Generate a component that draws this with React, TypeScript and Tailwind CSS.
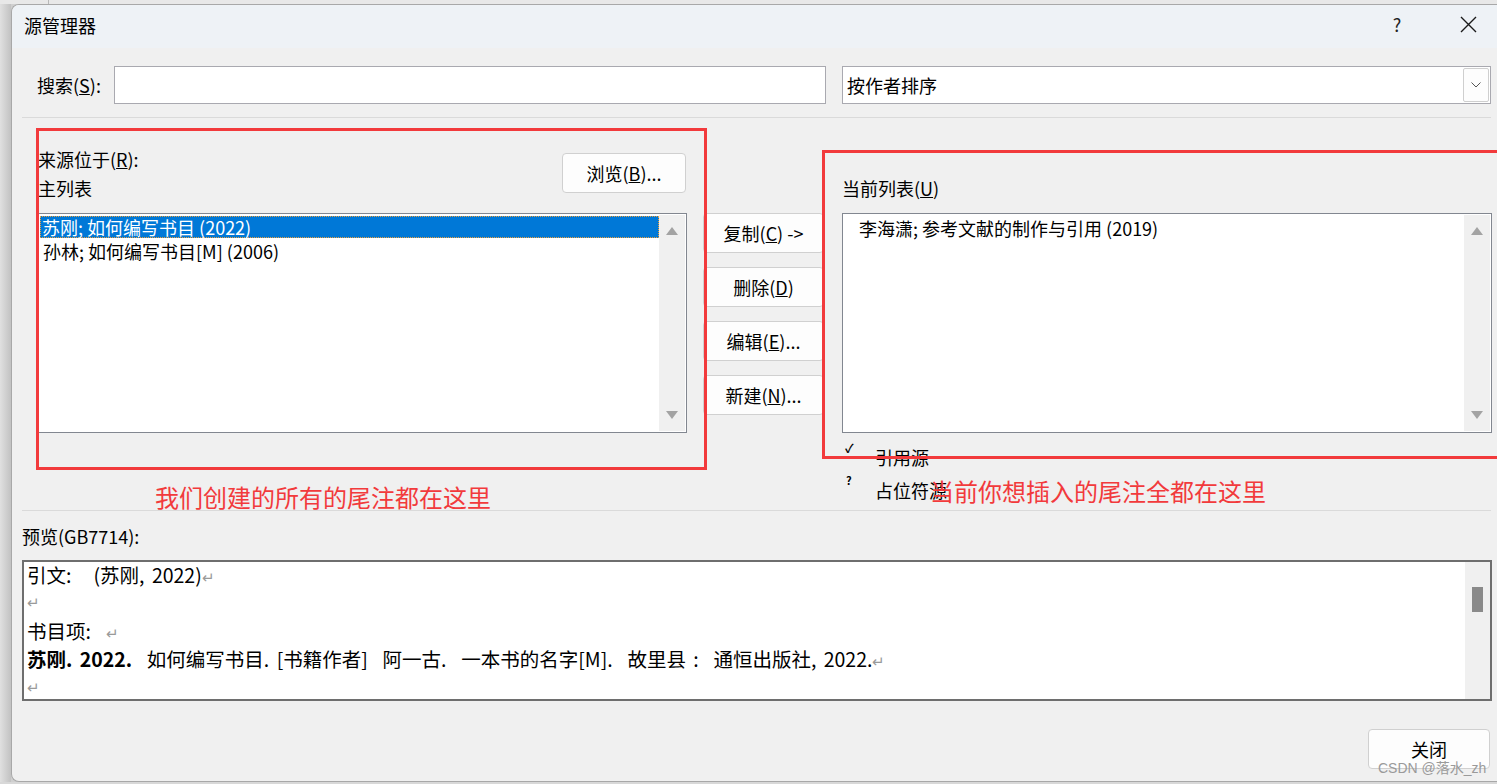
import React from 'react';

const FONT = "font-['Noto_Sans_CJK_SC','Liberation_Sans',sans-serif]";

function ArrowUp() {
  return (
    <svg width="12" height="8" viewBox="0 0 12 8"><path d="M6 0 L12 8 L0 8 Z" fill="#a3a3a3" /></svg>
  );
}

function ArrowDown() {
  return (
    <svg width="12" height="8" viewBox="0 0 12 8"><path d="M0 0 L12 0 L6 8 Z" fill="#a3a3a3" /></svg>
  );
}

function Listbox({ children }: { children: React.ReactNode }) {
  return (
    <div className="h-[220px] border border-[#828790] bg-white flex">
      <div className="flex-1 min-w-0 pt-[2px] pl-[1px]">{children}</div>
      <div className="w-[26px] bg-[#f0f0f0] flex flex-col items-center justify-between py-[12px] my-[1px] mr-[1px]">
        <ArrowUp />
        <ArrowDown />
      </div>
    </div>
  );
}

function Btn({ children, className = '' }: { children: React.ReactNode; className?: string }) {
  return (
    <div className={`h-[40px] bg-[#fdfdfd] border border-[#d0d0d0] rounded-[4px] flex items-center justify-center text-[18px] ${className}`}>
      {children}
    </div>
  );
}

const Ret = () => <span className="text-[#9a9a9a] text-[15px]">↵</span>;

export default function App() {
  return (
    <div className={`relative w-[1497px] h-[784px] overflow-hidden bg-[#cfcfcf] flex flex-col text-black ${FONT}`}>
      {/* backdrop strip */}
      <div className="h-[4px] bg-[#e8e8e8] flex">
        <div className="w-[48px]" />
        <div className="w-px bg-[#b8b8b8]" />
      </div>

      <div className="flex h-[778px]">
        <div className="w-[11px] bg-gradient-to-r from-[#e0e0e0] to-[#c2c2c2]" />

        {/* dialog */}
        <div className="w-[1486px] bg-[#f0f0f0] border-l border-t border-b border-[#a8a8a8] rounded-tl-[8px] rounded-bl-[8px] overflow-hidden flex flex-col">
          {/* title bar */}
          <div className="h-[43px] bg-[#eef2f6] flex items-center pl-[12px] pr-[6px] pb-[4px]">
            <div className="flex-1 text-[18px] leading-none">源管理器</div>
            <div className="w-[46px] text-center text-[18px] text-[#222]">?</div>
            <div className="w-[25px]" />
            <div className="w-[46px] flex items-center justify-center">
              <svg width="17" height="17" viewBox="0 0 17 17"><path d="M1 1 L16 16 M16 1 L1 16" stroke="#1a1a1a" strokeWidth="1.4" /></svg>
            </div>
          </div>

          {/* search row */}
          <div className="mt-[18px] h-[38px] flex items-center pl-[25px]">
            <div className="w-[77px] text-[18px]">搜索(<u>S</u>):</div>
            <div className="w-[712px] h-[38px] bg-white border border-[#a9a9b0]" />
            <div className="ml-[16px] w-[649px] h-[38px] bg-white border border-[#a9a9b0] flex items-center pl-[4px]">
              <div className="flex-1 text-[18px]">按作者排序</div>
              <div className="w-[26px] h-[34px] mr-[1px] border border-[#cfcfcf] bg-[#fdfdfd] rounded-[2px] flex items-center justify-center">
                <svg width="10" height="6" viewBox="0 0 10 6"><path d="M0.5 0.5 L5 5 L9.5 0.5" stroke="#555" fill="none" strokeWidth="1" /></svg>
              </div>
            </div>
          </div>

          <div className="mt-[13px] ml-[10px] w-[1469px] h-px bg-[#dadada]" />

          {/* main section */}
          <div className="h-[392px] flex pl-[26px]">
            {/* left */}
            <div className="w-[649px]">
              <div className="h-[95px] flex justify-between">
                <div className="pt-[27px] text-[18px] leading-[29px]">
                  <div>来源位于(<u>R</u>):</div>
                  <div>主列表</div>
                </div>
                <Btn className="mt-[35px] w-[124px] mr-[1px]">浏览(<u>B</u>)...</Btn>
              </div>
              <Listbox>
                <div className="h-[22px] bg-[#0078d7] border border-dotted border-[#e8a040] text-white text-[18px] leading-[20px] pl-[1px]">
                  苏刚; 如何编写书目 (2022)
                </div>
                <div className="text-[18px] leading-[26px] pl-[3px]">孙林; 如何编写书目[M] (2006)</div>
              </Listbox>
            </div>

            {/* middle buttons */}
            <div className="ml-[16px] w-[121px] pt-[95px] flex flex-col gap-[14px]">
              <Btn>复制(<u>C</u>) -&gt;</Btn>
              <Btn>删除(<u>D</u>)</Btn>
              <Btn>编辑(<u>E</u>)...</Btn>
              <Btn>新建(<u>N</u>)...</Btn>
            </div>

            {/* right */}
            <div className="ml-[18px] w-[650px]">
              <div className="h-[95px] pt-[56px] text-[18px] leading-[29px]">当前列表(<u>U</u>)</div>
              <Listbox>
                <div className="text-[18px] leading-[24px] pl-[15px]">李海潇; 参考文献的制作与引用 (2019)</div>
              </Listbox>
              <div className="mt-[10px] flex flex-col gap-[5px]">
                <div className="flex items-start h-[28px]">
                  <div className="w-[33px] pl-[3px] text-[12px] font-bold leading-[10px]">✓</div>
                  <div className="text-[18px] leading-[28px]">引用源</div>
                </div>
                <div className="flex items-start h-[28px]">
                  <div className="w-[33px] pl-[4px] text-[11px] font-bold leading-[8px]">?</div>
                  <div className="text-[18px] leading-[28px]">占位符源</div>
                </div>
              </div>
            </div>
          </div>

          <div className="ml-[10px] w-[1469px] h-px bg-[#dadada]" />

          {/* preview */}
          <div className="mt-[11px] ml-[10px] text-[18px] leading-[28px]">预览(GB7714):</div>
          <div className="mt-[10px] ml-[10px] w-[1470px] h-[141px] border-2 border-[#6e6e6e] bg-white flex">
            <div className="flex-1 pl-[3px] text-[19.5px] whitespace-pre [word-spacing:3px]">
              <div className="h-[26px] leading-[26px]">引文:   (苏刚, 2022)<Ret /></div>
              <div className="h-[24px] leading-[24px]"><Ret /></div>
              <div className="h-[32px] pt-[6px] leading-[26px]">书目项:  <Ret /></div>
              <div className="h-[30px] leading-[30px]">
                <b>苏刚. 2022.</b>  如何编写书目. [书籍作者]  阿一古.  一本书的名字[M].  故里县 :  通恒出版社, 2022.<Ret />
              </div>
              <div className="h-[22px] leading-[22px]"><Ret /></div>
            </div>
            <div className="w-[25px] bg-[#f0f0f0] pt-[25px] flex justify-center">
              <div className="w-[11px] h-[25px] bg-[#8a8a8a]" />
            </div>
          </div>

          {/* footer */}
          <div className="mt-[28px] flex justify-end pr-[7px]">
            <Btn className="w-[122px]">关闭</Btn>
          </div>
        </div>
      </div>
      <div className="h-[2px] bg-[#d8d8d8]" />

      {/* annotations */}
      <div className="absolute left-[36px] top-[128px] w-[671px] h-[342px] border-[3px] border-[#f23a3c] pointer-events-none" />
      <div className="absolute left-[822px] top-[150px] w-[690px] h-[309px] border-[3px] border-[#f23a3c] pointer-events-none" />
      <div className="absolute left-[155px] top-[482px] text-[24px] leading-[30px] text-[#f23a3c]">我们创建的所有的尾注都在这里</div>
      <div className="absolute left-[930px] top-[476px] text-[24px] leading-[30px] text-[#f23a3c]">当前你想插入的尾注全都在这里</div>
      <div className="absolute left-[1378px] top-[758px] text-[14px] leading-[20px] text-[#9a9a9a] font-['Liberation_Sans','Noto_Sans_CJK_SC',sans-serif]">CSDN @落水_zh</div>
    </div>
  );
}
